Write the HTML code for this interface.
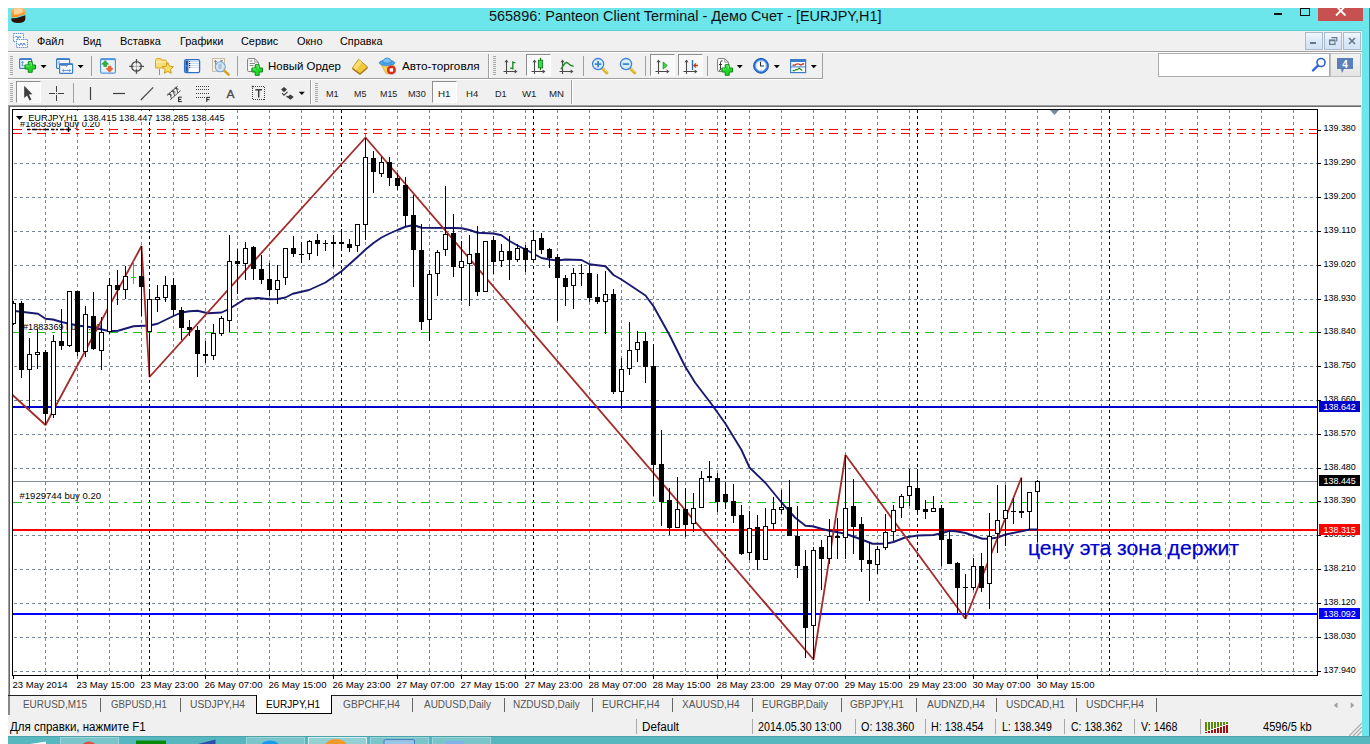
<!DOCTYPE html>
<html><head><meta charset="utf-8"><title>565896: Panteon Client Terminal</title>
<style>
html,body{margin:0;padding:0;background:#fff;}
body{width:1370px;height:744px;position:relative;overflow:hidden;font-family:"Liberation Sans",sans-serif;}
div,span,svg{position:absolute;box-sizing:border-box;}
span{white-space:nowrap;}
svg text{font-family:"Liberation Sans",sans-serif;}
</style></head><body>
<div style="left:8px;top:8px;width:1362px;height:728px;background:#6CE6EA;"></div>
<div style="left:1369px;top:8px;width:1px;height:728px;background:#3A8F96;"></div>
<div style="left:8px;top:31px;width:1354px;height:705px;background:#F0F0F0;"></div>
<div style="left:8px;top:30px;width:1354px;height:1px;background:#5FCFD4;"></div>
<svg style="left:10px;top:8px" width="17" height="17" viewBox="0 0 17 17">
<defs><linearGradient id="og" x1="0" y1="0" x2="0" y2="1"><stop offset="0" stop-color="#FFC070"/><stop offset="0.45" stop-color="#FFA436"/><stop offset="1" stop-color="#F58A18"/></linearGradient></defs>
<path d="M1.3 4 Q1.3 0 5 0 L11.5 0 Q15.2 0 15.2 4 L15.2 6.3 Q8 9.3 1.3 9.6 Z" fill="url(#og)"/>
<path d="M4 1.2 Q8 -0.3 12.5 1.2 L12.5 5 Q8 6.6 4 6.8 Z" fill="#FFE2BC" opacity="0.75"/>
<path d="M1.2 10.6 Q8 10.2 15.3 7.3 L15.3 11 Q15 15 8 15 Q1.2 15 1.2 11 Z" fill="#2A1408"/>
</svg>
<span style="left:488.6px;top:7.20px;font-size:15px;line-height:18px;color:#111;transform:scaleX(0.9635);transform-origin:0 50%;">565896: Panteon Client Terminal - Демо Счет - [EURJPY,H1]</span>
<div style="left:1274px;top:13px;width:8px;height:2px;background:#111;"></div>
<div style="left:1300px;top:8px;width:10px;height:8px;border:1px solid #111;"></div>
<div style="left:1318px;top:8px;width:45px;height:13px;background:#C75050;"></div>
<svg style="left:1335px;top:8px" width="12" height="9" viewBox="0 0 12 9"><path d="M1 -2 L10.5 7.5 M10.5 -2 L1 7.5" stroke="#fff" stroke-width="1.8" fill="none"/></svg>
<svg style="left:13px;top:33px" width="16" height="16" viewBox="0 0 16 16">
<rect x="0.5" y="0.5" width="10" height="8" fill="#fff" stroke="#5585DC" stroke-width="0.9" stroke-dasharray="1.5 0.7"/>
<path d="M2 4.5 L3.5 3 L5 5.5 L6.5 3 L8 5" stroke="#3B6FD0" stroke-width="0.9" fill="none"/>
<rect x="3.5" y="6.5" width="11" height="8" fill="#fff" stroke="#5585DC" stroke-width="0.9" stroke-dasharray="1.5 0.7"/>
<path d="M5 10.5 L6.5 12.5 L8 10 L9.5 12.5 L11 10 L12.5 12.5" stroke="#3B6FD0" stroke-width="0.9" fill="none"/>
</svg>
<span style="left:37.2px;top:34.45px;font-size:11.5px;line-height:15.5px;color:#000;transform:scaleX(0.9479);transform-origin:0 50%;">Файл</span>
<span style="left:83.4px;top:34.45px;font-size:11.5px;line-height:15.5px;color:#000;transform:scaleX(0.8748);transform-origin:0 50%;">Вид</span>
<span style="left:120.2px;top:34.45px;font-size:11.5px;line-height:15.5px;color:#000;transform:scaleX(0.9545);transform-origin:0 50%;">Вставка</span>
<span style="left:180px;top:34.45px;font-size:11.5px;line-height:15.5px;color:#000;transform:scaleX(0.9472);transform-origin:0 50%;">Графики</span>
<span style="left:241.3px;top:34.45px;font-size:11.5px;line-height:15.5px;color:#000;transform:scaleX(0.9446);transform-origin:0 50%;">Сервис</span>
<span style="left:296.5px;top:34.45px;font-size:11.5px;line-height:15.5px;color:#000;transform:scaleX(0.9542);transform-origin:0 50%;">Окно</span>
<span style="left:340.4px;top:34.45px;font-size:11.5px;line-height:15.5px;color:#000;transform:scaleX(0.9443);transform-origin:0 50%;">Справка</span>
<div style="left:1305px;top:32px;width:18px;height:18px;background:linear-gradient(#F2F7FD,#DCE9F8 50%,#D3E2F4);border:1px solid #A9BACD;"></div>
<div style="left:1324px;top:32px;width:18px;height:18px;background:linear-gradient(#F2F7FD,#DCE9F8 50%,#D3E2F4);border:1px solid #A9BACD;"></div>
<div style="left:1343px;top:32px;width:18px;height:18px;background:linear-gradient(#F2F7FD,#DCE9F8 50%,#D3E2F4);border:1px solid #A9BACD;"></div>
<div style="left:1310px;top:42px;width:6px;height:2px;background:#66788C;"></div>
<svg style="left:1329px;top:37px" width="9" height="9" viewBox="0 0 9 9"><path d="M2.5 0.7 H7.8 V4.5" stroke="#66788C" stroke-width="1.2" fill="none"/><rect x="0.6" y="3.1" width="5.3" height="4.3" stroke="#66788C" stroke-width="1.2" fill="none"/><path d="M0.5 3.5 H6" stroke="#66788C" stroke-width="1.4"/></svg>
<svg style="left:1348px;top:37px" width="8" height="8" viewBox="0 0 8 8"><path d="M1 1 L7 7 M7 1 L1 7" stroke="#66788C" stroke-width="1.7" fill="none"/></svg>
<div style="left:8px;top:51px;width:1354px;height:1px;background:#A0A0A0;"></div>
<div style="left:8px;top:52px;width:1354px;height:1px;background:#FFFFFF;"></div>
<div style="left:8px;top:78px;width:815px;height:1px;background:#A0A0A0;"></div>
<div style="left:8px;top:79px;width:815px;height:1px;background:#FFFFFF;"></div>
<div style="left:822px;top:53px;width:1px;height:26px;background:#A0A0A0;"></div>
<div style="left:488px;top:54px;width:1px;height:24px;background:#A0A0A0;"></div>
<div style="left:489px;top:54px;width:1px;height:24px;background:#fff;"></div>
<div style="left:310px;top:80px;width:1px;height:24px;background:#A0A0A0;"></div>
<div style="left:311px;top:80px;width:1px;height:24px;background:#fff;"></div>
<div style="left:571px;top:80px;width:1px;height:24px;background:#A0A0A0;"></div>
<div style="left:572px;top:80px;width:1px;height:24px;background:#fff;"></div>
<div style="left:10px;top:56px;width:3px;height:1px;background:#A8A8A8;"></div>
<div style="left:10px;top:58px;width:3px;height:1px;background:#A8A8A8;"></div>
<div style="left:10px;top:60px;width:3px;height:1px;background:#A8A8A8;"></div>
<div style="left:10px;top:62px;width:3px;height:1px;background:#A8A8A8;"></div>
<div style="left:10px;top:64px;width:3px;height:1px;background:#A8A8A8;"></div>
<div style="left:10px;top:66px;width:3px;height:1px;background:#A8A8A8;"></div>
<div style="left:10px;top:68px;width:3px;height:1px;background:#A8A8A8;"></div>
<div style="left:10px;top:70px;width:3px;height:1px;background:#A8A8A8;"></div>
<div style="left:10px;top:72px;width:3px;height:1px;background:#A8A8A8;"></div>
<div style="left:10px;top:74px;width:3px;height:1px;background:#A8A8A8;"></div>
<div style="left:493px;top:56px;width:3px;height:1px;background:#A8A8A8;"></div>
<div style="left:493px;top:58px;width:3px;height:1px;background:#A8A8A8;"></div>
<div style="left:493px;top:60px;width:3px;height:1px;background:#A8A8A8;"></div>
<div style="left:493px;top:62px;width:3px;height:1px;background:#A8A8A8;"></div>
<div style="left:493px;top:64px;width:3px;height:1px;background:#A8A8A8;"></div>
<div style="left:493px;top:66px;width:3px;height:1px;background:#A8A8A8;"></div>
<div style="left:493px;top:68px;width:3px;height:1px;background:#A8A8A8;"></div>
<div style="left:493px;top:70px;width:3px;height:1px;background:#A8A8A8;"></div>
<div style="left:493px;top:72px;width:3px;height:1px;background:#A8A8A8;"></div>
<div style="left:493px;top:74px;width:3px;height:1px;background:#A8A8A8;"></div>
<div style="left:10px;top:83px;width:3px;height:1px;background:#A8A8A8;"></div>
<div style="left:10px;top:85px;width:3px;height:1px;background:#A8A8A8;"></div>
<div style="left:10px;top:87px;width:3px;height:1px;background:#A8A8A8;"></div>
<div style="left:10px;top:89px;width:3px;height:1px;background:#A8A8A8;"></div>
<div style="left:10px;top:91px;width:3px;height:1px;background:#A8A8A8;"></div>
<div style="left:10px;top:93px;width:3px;height:1px;background:#A8A8A8;"></div>
<div style="left:10px;top:95px;width:3px;height:1px;background:#A8A8A8;"></div>
<div style="left:10px;top:97px;width:3px;height:1px;background:#A8A8A8;"></div>
<div style="left:10px;top:99px;width:3px;height:1px;background:#A8A8A8;"></div>
<div style="left:10px;top:101px;width:3px;height:1px;background:#A8A8A8;"></div>
<div style="left:315px;top:83px;width:3px;height:1px;background:#A8A8A8;"></div>
<div style="left:315px;top:85px;width:3px;height:1px;background:#A8A8A8;"></div>
<div style="left:315px;top:87px;width:3px;height:1px;background:#A8A8A8;"></div>
<div style="left:315px;top:89px;width:3px;height:1px;background:#A8A8A8;"></div>
<div style="left:315px;top:91px;width:3px;height:1px;background:#A8A8A8;"></div>
<div style="left:315px;top:93px;width:3px;height:1px;background:#A8A8A8;"></div>
<div style="left:315px;top:95px;width:3px;height:1px;background:#A8A8A8;"></div>
<div style="left:315px;top:97px;width:3px;height:1px;background:#A8A8A8;"></div>
<div style="left:315px;top:99px;width:3px;height:1px;background:#A8A8A8;"></div>
<div style="left:315px;top:101px;width:3px;height:1px;background:#A8A8A8;"></div>
<div style="left:91px;top:56px;width:1px;height:20px;background:#A0A0A0;"></div>
<div style="left:237px;top:56px;width:1px;height:20px;background:#A0A0A0;"></div>
<div style="left:583px;top:56px;width:1px;height:20px;background:#A0A0A0;"></div>
<div style="left:645px;top:56px;width:1px;height:20px;background:#A0A0A0;"></div>
<div style="left:707px;top:56px;width:1px;height:20px;background:#A0A0A0;"></div>
<div style="left:73px;top:83px;width:1px;height:20px;background:#A0A0A0;"></div>
<div style="left:526px;top:54px;width:25px;height:22px;background:#F9F9F9;border-left:1px solid #8E8E8E;border-top:1px solid #8E8E8E;border-right:1px solid #FFFFFF;border-bottom:1px solid #FFFFFF;"></div>
<div style="left:650px;top:54px;width:25px;height:22px;background:#F9F9F9;border-left:1px solid #8E8E8E;border-top:1px solid #8E8E8E;border-right:1px solid #FFFFFF;border-bottom:1px solid #FFFFFF;"></div>
<div style="left:678px;top:54px;width:25px;height:22px;background:#F9F9F9;border-left:1px solid #8E8E8E;border-top:1px solid #8E8E8E;border-right:1px solid #FFFFFF;border-bottom:1px solid #FFFFFF;"></div>
<div style="left:16px;top:81px;width:25px;height:22px;background:#F9F9F9;border-left:1px solid #8E8E8E;border-top:1px solid #8E8E8E;border-right:1px solid #FFFFFF;border-bottom:1px solid #FFFFFF;"></div>
<div style="left:432px;top:81px;width:25px;height:22px;background:#F9F9F9;border-left:1px solid #8E8E8E;border-top:1px solid #8E8E8E;border-right:1px solid #FFFFFF;border-bottom:1px solid #FFFFFF;"></div>
<svg style="left:0;top:0" width="1370" height="744" viewBox="0 0 1370 744"><rect x="19.6" y="58.8" width="12" height="9.6" rx="1" fill="#F2F7FD" stroke="#3B7CCB" stroke-width="1.2"/><rect x="19.6" y="58.4" width="12" height="1.6" fill="#3B7CCB"/><path d="M22.5 61.5 v4.5 M21.3 62.8 l1.2 -1.4 1.2 1.4 M21.3 64.8 l1.2 1.4 1.2 -1.4" stroke="#5E8FCB" stroke-width="0.9" fill="none"/><path d="M28.2 61.7 h4 v3.3 h3.3 v4 h-3.3 v3.3 h-4 v-3.3 h-3.3 v-4 h3.3 z" fill="#25D52C" stroke="#0B8A12" stroke-width="1"/><path d="M29.1 62.800000000000004 h2.2 v3.2 M25.9 66.0 h3.2" stroke="#9CFF9C" stroke-width="0.9" fill="none" opacity="0.8"/><path d="M40.6 65 h6 l-3 3.2 z" fill="#000"/><rect x="56.6" y="58.8" width="13" height="9.6" rx="1" fill="#F2F7FD" stroke="#3B7CCB" stroke-width="1.2"/><rect x="56.6" y="58.4" width="13" height="1.6" fill="#3B7CCB"/><rect x="59.6" y="63.8" width="13" height="9.6" rx="1" fill="#F2F7FD" stroke="#3B7CCB" stroke-width="1.2"/><rect x="59.6" y="63.4" width="13" height="1.6" fill="#3B7CCB"/><path d="M59 60.8 v4 M60.5 65.5 h7 M66 64.3 l1.5 1.2 -1.5 1.2" stroke="#5E8FCB" stroke-width="0.9" fill="none"/><path d="M62.5 70.5 h8 M63.8 69.3 l-1.5 1.2 1.5 1.2 M69.2 69.3 l1.5 1.2 -1.5 1.2" stroke="#5E8FCB" stroke-width="0.9" fill="none"/><path d="M77.6 65 h6 l-3 3.2 z" fill="#000"/><rect x="100.6" y="58.8" width="14.8" height="14.4" rx="1.5" fill="#F4F8FD" stroke="#4C93E0" stroke-width="1.2"/><rect x="100.6" y="58.4" width="14.8" height="1.8" fill="#4C93E0"/><path d="M109.5 62.5 h4.5 M109.5 64.5 h4.5 M101.5 69.5 h5 M101.5 71.5 h5" stroke="#D8E2EE" stroke-width="0.8"/><path d="M105.2 60.6 l3.4 3.6 h-2 v2.4 h-2.8 v-2.4 h-2 z" fill="#2DB83A" stroke="#148A20" stroke-width="0.6"/><path d="M109.6 72.2 l-3.4 -3.6 h2 v-2.4 h2.8 v2.4 h2 z" fill="#F06A30" stroke="#C8401A" stroke-width="0.6"/><circle cx="136.5" cy="66.4" r="4.8" fill="none" stroke="#4A4A4A" stroke-width="1.3"/><path d="M136.5 59 V63.5 M136.5 69.3 V73.8 M129.2 66.4 H133.6 M139.4 66.4 H144" stroke="#4A4A4A" stroke-width="1.3"/><path d="M136.5 64 v4.8 M134 66.4 h5" stroke="#9A9A9A" stroke-width="0.7"/><path d="M155.5 60.5 q0 -2 2 -2 h2.5 q1.5 0 2 1.5 h3 q1.5 0 1.5 1.5 v6.5 h-11 z" fill="#F7DC78" stroke="#D9A827" stroke-width="1"/><path d="M156 62 h10" stroke="#FFF3B8" stroke-width="1.2"/><path d="M159.5 69.5 v5" stroke="#333" stroke-width="1" stroke-dasharray="1 1"/><path d="M167.8 62.6 l1.7 3.6 3.9 .5 -2.9 2.7 .8 3.9 -3.5 -1.9 -3.5 1.9 .8 -3.9 -2.9 -2.7 3.9 -.5 z" fill="#FBE060" stroke="#C8930F" stroke-width="0.9"/><rect x="184.6" y="59.6" width="15" height="13" rx="1.6" fill="#FFFFFF" stroke="#2C6FC6" stroke-width="1.3"/><rect x="185.2" y="60.2" width="3.3" height="11.8" fill="#3C80D8"/><rect x="186.3" y="61" width="1" height="4" fill="#0A1A40"/><rect x="186.3" y="66.5" width="1" height="4.5" fill="#1A3A80"/><path d="M189.5 61.5 h9.5 M189.5 63.5 h9.5 M189.5 65.5 h9.5 M189.5 67.5 h9.5" stroke="#BFD2F2" stroke-width="0.8"/><rect x="189" y="61" width="1.2" height="1.2" fill="#E02020"/><rect x="189" y="63" width="1.2" height="1.2" fill="#203020"/><rect x="189" y="65" width="1.2" height="1.2" fill="#203020"/><rect x="189" y="67" width="1.2" height="1.2" fill="#E02020"/><rect x="212.5" y="58.5" width="12" height="12.8" fill="#F4F1EA" stroke="#C9BCA0" stroke-width="1"/><path d="M215.5 60 v6 M221.5 60 v5 M214 61.5 h3 M220 60.8 h3" stroke="#8A8A8A" stroke-width="1"/><circle cx="220.3" cy="66.8" r="5" fill="#CFE6FA" fill-opacity="0.9" stroke="#6DA6E0" stroke-width="1.1"/><rect x="218.3" y="64" width="3.2" height="5" fill="#A8B8C8" opacity="0.8"/><path d="M224.2 70.6 L228.6 74.6" stroke="#D6A21E" stroke-width="2.6" stroke-linecap="round"/><path d="M247.6 59.6 q0 -1 1 -1 h6.2 l3.6 3.6 v8.2 q0 1 -1 1 h-8.8 q-1 0 -1 -1 z" fill="#FFFFFF" stroke="#7A7A7A" stroke-width="1"/><path d="M254.8 58.8 v3.4 h3.4" fill="none" stroke="#7A7A7A" stroke-width="0.8"/><path d="M249.5 61 h3 M249.5 63.5 h5.5 M249.5 65.5 h4" stroke="#8A8A8A" stroke-width="1"/><path d="M255.2 64.7 h4 v3.3 h3.3 v4 h-3.3 v3.3 h-4 v-3.3 h-3.3 v-4 h3.3 z" fill="#25D52C" stroke="#0B8A12" stroke-width="1"/><path d="M256.1 65.8 h2.2 v3.2 M252.9 69.0 h3.2" stroke="#9CFF9C" stroke-width="0.9" fill="none" opacity="0.8"/><path d="M352.4 68 L358.6 59.3 L367.6 67 L360 73.6 Z" fill="#F2C83C" stroke="#B5851A" stroke-width="0.9"/><path d="M353 67.6 L359 59.8 L362 62.3 L356 70.2 Z" fill="#FBE27A" opacity="0.85"/><path d="M352.4 68 L360 73.6 L367.6 67 L367.6 68.6 L360 75 L352.4 69.5 Z" fill="#A87412"/><path d="M381.5 65 Q387 69 393.8 64.5 L394.5 67 Q389 77 385.5 72.8 Z" fill="#F5DA58" stroke="#D2A82A" stroke-width="0.8"/><ellipse cx="387" cy="62.8" rx="7.8" ry="2.6" fill="#4FA6E8" stroke="#2E7FCB" stroke-width="0.8"/><path d="M382.8 62.5 q0.5 -4.4 4.4 -4.4 q3.8 0 4.2 4.4 q-4.3 1.6 -8.6 0 z" fill="#7CC2F2" stroke="#2E7FCB" stroke-width="0.8"/><circle cx="391.4" cy="70" r="4.1" fill="#E3261C"/><circle cx="391.4" cy="70" r="4.1" fill="none" stroke="#B81810" stroke-width="0.6"/><rect x="389.7" y="68.3" width="3.4" height="3.4" fill="#FFFFFF"/><path d="M506.5 61 V74 M503.5 71.5 H516" stroke="#4A4A4A" stroke-width="1.1" fill="none"/><path d="M506.5 59.5 l-2 2.8 h4 z M517.5 71.5 l-2.8 -2 v4 z" fill="#4A4A4A"/><path d="M512.8 61.2 V69.6 M512.8 62.6 h2.6 M512.8 68.2 h-2.6" stroke="#1E8F2A" stroke-width="1.4" fill="none"/><path d="M534.5 61 V74 M531.5 71.5 H544" stroke="#4A4A4A" stroke-width="1.1" fill="none"/><path d="M534.5 59.5 l-2 2.8 h4 z M545.5 71.5 l-2.8 -2 v4 z" fill="#4A4A4A"/><path d="M540.5 57.8 V70.2" stroke="#147A1E" stroke-width="1.2"/><rect x="538.4" y="60.2" width="4.2" height="7.6" fill="#3CDC48" stroke="#147A1E" stroke-width="0.9"/><path d="M562.5 61 V74 M559.5 71.5 H572" stroke="#4A4A4A" stroke-width="1.1" fill="none"/><path d="M562.5 59.5 l-2 2.8 h4 z M573.5 71.5 l-2.8 -2 v4 z" fill="#4A4A4A"/><path d="M561 69.2 Q565.5 60.5 568 63.2 T573.6 66.2" stroke="#1E8F2A" stroke-width="1.4" fill="none"/><path d="M602.3000000000001 68.4 L606.9 72.8" stroke="#D9B21E" stroke-width="3" stroke-linecap="round"/><path d="M602.5 67.8 L607.3000000000001 72.4" stroke="#F6E27A" stroke-width="1"/><circle cx="598.1" cy="64.1" r="5.6" fill="#D9EEFC" stroke="#3B7FDB" stroke-width="1.3"/><path d="M594.9 64.1 h6.4 M598.1 60.9 v6.4" stroke="#3F86C6" stroke-width="1.8"/><path d="M630.2 68.4 L634.8 72.8" stroke="#D9B21E" stroke-width="3" stroke-linecap="round"/><path d="M630.4 67.8 L635.2 72.4" stroke="#F6E27A" stroke-width="1"/><circle cx="626" cy="64.1" r="5.6" fill="#D9EEFC" stroke="#3B7FDB" stroke-width="1.3"/><path d="M622.8 64.1 h6.4" stroke="#3F86C6" stroke-width="1.8"/><path d="M658.5 61 V74 M655.5 71.5 H668" stroke="#4A4A4A" stroke-width="1.1" fill="none"/><path d="M658.5 59.5 l-2 2.8 h4 z M669.5 71.5 l-2.8 -2 v4 z" fill="#4A4A4A"/><path d="M663.2 62 L667.2 65.5 L663.2 69 Z" fill="#3CDC48" stroke="#179A24" stroke-width="0.9"/><path d="M686.5 61 V74 M683.5 71.5 H696" stroke="#4A4A4A" stroke-width="1.1" fill="none"/><path d="M686.5 59.5 l-2 2.8 h4 z M697.5 71.5 l-2.8 -2 v4 z" fill="#4A4A4A"/><path d="M692.5 60 V70" stroke="#1F6FB5" stroke-width="1.3"/><path d="M698 65.5 H694 M696 63.4 L693.8 65.5 L696 67.6" stroke="#D0400A" stroke-width="1.3" fill="none"/><path d="M717.6 59.6 q0 -1 1 -1 h6.2 l3.6 3.6 v8.2 q0 1 -1 1 h-8.8 q-1 0 -1 -1 z" fill="#FFFFFF" stroke="#7A7A7A" stroke-width="1"/><path d="M724.8 58.8 v3.4 h3.4" fill="none" stroke="#7A7A7A" stroke-width="0.8"/><path d="M722.5 60.8 q-2 -.3 -2 1.7 v6.5 q0 1.6 -1.3 1.6 M719 64.5 h3" stroke="#3A3A3A" stroke-width="1" fill="none"/><path d="M725.2 64.7 h4 v3.3 h3.3 v4 h-3.3 v3.3 h-4 v-3.3 h-3.3 v-4 h3.3 z" fill="#25D52C" stroke="#0B8A12" stroke-width="1"/><path d="M726.1 65.8 h2.2 v3.2 M722.9 69.0 h3.2" stroke="#9CFF9C" stroke-width="0.9" fill="none" opacity="0.8"/><path d="M736.8 65 h6 l-3 3.2 z" fill="#000"/><circle cx="761" cy="65.8" r="7.4" fill="#2C78E0" stroke="#1B58B8" stroke-width="1"/><circle cx="761" cy="65.8" r="5.4" fill="#FDFDFD" stroke="#8CB8F0" stroke-width="0.8"/><path d="M760.5 61.8 V66 H764" stroke="#333" stroke-width="1.1" fill="none"/><path d="M761 61 v0.8 M761 69.8 v0.8 M756.4 65.8 h0.8 M764.8 65.8 h0.8" stroke="#888" stroke-width="0.8"/><path d="M773.8 65 h6 l-3 3.2 z" fill="#000"/><rect x="790.6" y="59.6" width="15" height="13" fill="#FFFFFF" stroke="#3B7CCB" stroke-width="1.2"/><rect x="790.6" y="59.4" width="15" height="2.6" fill="#3B7CCB"/><path d="M791 66.9 h14.4" stroke="#3B7CCB" stroke-width="1"/><path d="M792.5 65.2 h2.5 l1.5 -1.2 h2.5 l1.2 .8 h1.5 l1 -1 h1.5" stroke="#A82814" stroke-width="1.2" fill="none"/><path d="M792.5 70.6 h2 l1.2 -1 h1.8 l1.8 -1.6 1.6 1.6 1.4 1" stroke="#1E8F2A" stroke-width="1.2" fill="none"/><path d="M810.8 65 h6 l-3 3.2 z" fill="#000"/><path d="M24.2 85.8 V98 L27 95.4 L29.6 100.4 L31.4 99.5 L28.9 94.6 L32.4 94.3 Z" fill="#3E3E3E"/><path d="M56.5 86 V92 M56.5 95 V101 M49 93.5 H55 M58 93.5 H64" stroke="#3E3E3E" stroke-width="1"/><rect x="56" y="93" width="1" height="1" fill="#3E3E3E"/><path d="M90.5 87 V100" stroke="#3E3E3E" stroke-width="1.2"/><path d="M113 93.5 H125" stroke="#3E3E3E" stroke-width="1.2"/><path d="M140.8 100 L153.2 87.4" stroke="#3E3E3E" stroke-width="1.1"/><path d="M166.8 95.6 L177.6 86.4 M170.2 99.8 L180.6 90.6 M169.6 92.6 l1.8 6 M172.8 89.6 l1.8 6.2 M176 86.6 l1.8 6.2 M167.5 94 l4.5 1.2 M171 91 l4.5 1.2 M174.2 88 l4.5 1.2" stroke="#3E3E3E" stroke-width="0.9" fill="none"/><path d="M178.6 97.2 h3.2 M178.6 99.4 h2.6 M178.6 101.6 h3.2 M178.6 97 v5" stroke="#222" stroke-width="1" fill="none"/><path d="M196 86.5 H209" stroke="#3E3E3E" stroke-width="1" stroke-dasharray="1 1"/><path d="M196 89.5 H209" stroke="#3E3E3E" stroke-width="1" stroke-dasharray="1 1"/><path d="M196 93.5 H209" stroke="#3E3E3E" stroke-width="1" stroke-dasharray="1 1"/><path d="M196 97.5 H209" stroke="#3E3E3E" stroke-width="1" stroke-dasharray="1 1"/><rect x="205" y="96" width="6" height="7" fill="#F0F0F0"/><path d="M206.8 97 v5 M206.8 97.4 h3.2 M206.8 99.6 h2.6" stroke="#222" stroke-width="1" fill="none"/><text x="226.6" y="97.6" font-size="11.8" fill="#4A4A4A" stroke="#4A4A4A" stroke-width="0.3" textLength="8" lengthAdjust="spacingAndGlyphs">A</text><rect x="252.5" y="86.5" width="12" height="13" fill="none" stroke="#3E3E3E" stroke-width="1" stroke-dasharray="1 1" shape-rendering="crispEdges"/><rect x="251.8" y="85.8" width="1.6" height="1.6" fill="#3E3E3E"/><path d="M255.4 89.8 H262 M258.7 89.8 V97.6" stroke="#3E3E3E" stroke-width="1.5" fill="none"/><path d="M284 87 l3 2.6 -3 2.6 -3 -2.6 z M290.4 94.4 l3.4 2.7 -3.4 2.7 -3.4 -2.7 z" fill="#3E3E3E"/><path d="M282 93.2 l2 2 3.6 -3.4 M286.5 96 l1.5 1.2" stroke="#3E3E3E" stroke-width="1.1" fill="none"/><path d="M298.8 91.8 h6 l-3 3.2 z" fill="#000"/></svg>
<span style="left:325.7px;top:87.05px;font-size:9.5px;line-height:13.5px;color:#222;transform:scaleX(0.9623);transform-origin:0 50%;">M1</span>
<span style="left:353.7px;top:87.05px;font-size:9.5px;line-height:13.5px;color:#222;transform:scaleX(0.9320);transform-origin:0 50%;">M5</span>
<span style="left:380px;top:87.05px;font-size:9.5px;line-height:13.5px;color:#222;transform:scaleX(0.9361);transform-origin:0 50%;">M15</span>
<span style="left:407.5px;top:87.05px;font-size:9.5px;line-height:13.5px;color:#222;transform:scaleX(0.9631);transform-origin:0 50%;">M30</span>
<span style="left:438px;top:87.05px;font-size:9.5px;line-height:13.5px;color:#222;transform:scaleX(1.0293);transform-origin:0 50%;">H1</span>
<span style="left:465.8px;top:87.05px;font-size:9.5px;line-height:13.5px;color:#222;transform:scaleX(1.0046);transform-origin:0 50%;">H4</span>
<span style="left:494.8px;top:87.05px;font-size:9.5px;line-height:13.5px;color:#222;transform:scaleX(0.9552);transform-origin:0 50%;">D1</span>
<span style="left:522px;top:87.05px;font-size:9.5px;line-height:13.5px;color:#222;transform:scaleX(1.0175);transform-origin:0 50%;">W1</span>
<span style="left:548.7px;top:87.05px;font-size:9.5px;line-height:13.5px;color:#222;transform:scaleX(1.0152);transform-origin:0 50%;">MN</span>
<span style="left:268.4px;top:58.70px;font-size:11px;line-height:15px;color:#000;transform:scaleX(1.0415);transform-origin:0 50%;">Новый Ордер</span>
<span style="left:402.4px;top:58.70px;font-size:11px;line-height:15px;color:#000;transform:scaleX(1.0683);transform-origin:0 50%;">Авто-торговля</span>
<div style="left:1158px;top:53px;width:172px;height:24px;background:#fff;border:1px solid #ABADB3;"></div>
<div style="left:1330px;top:53px;width:31px;height:24px;background:linear-gradient(#F4F4F4,#E4E4E4);border:1px solid #C0C0C0;"></div>
<svg style="left:1311px;top:57px" width="16" height="16" viewBox="0 0 16 16"><circle cx="10" cy="5.5" r="4" fill="#fff" stroke="#2F5FD0" stroke-width="1.6"/><path d="M7 8.5 L2 13.5" stroke="#2F5FD0" stroke-width="2.4" stroke-linecap="round"/></svg>
<svg style="left:1336px;top:57px" width="18" height="18" viewBox="0 0 18 18"><path d="M1 1 H17 V12 H8 L6 16 L5 12 H1 Z" fill="#5B7FB8"/><text x="9" y="10.5" font-size="10" font-weight="bold" fill="#fff" text-anchor="middle">4</text></svg>
<div style="left:8px;top:105px;width:1354px;height:591px;background:#fff;"></div>
<div style="left:8px;top:105px;width:1354px;height:1px;background:#A0A0A0;"></div>
<div style="left:8px;top:106px;width:1354px;height:1px;background:#696969;"></div>
<div style="left:8px;top:105px;width:1px;height:591px;background:#A0A0A0;"></div>
<div style="left:9px;top:106px;width:1px;height:590px;background:#696969;"></div>
<div style="left:1361px;top:105px;width:1px;height:591px;background:#E3E3E3;"></div>
<svg style="left:0;top:0" width="1370" height="744" viewBox="0 0 1370 744">
<g shape-rendering="crispEdges">
<line x1="45.5" y1="110" x2="45.5" y2="675" stroke="#778899" stroke-width="1" stroke-dasharray="3 3"/>
<line x1="77.5" y1="110" x2="77.5" y2="675" stroke="#778899" stroke-width="1" stroke-dasharray="3 3"/>
<line x1="109.5" y1="110" x2="109.5" y2="675" stroke="#778899" stroke-width="1" stroke-dasharray="3 3"/>
<line x1="141.5" y1="110" x2="141.5" y2="675" stroke="#778899" stroke-width="1" stroke-dasharray="3 3"/>
<line x1="173.5" y1="110" x2="173.5" y2="675" stroke="#778899" stroke-width="1" stroke-dasharray="3 3"/>
<line x1="205.5" y1="110" x2="205.5" y2="675" stroke="#778899" stroke-width="1" stroke-dasharray="3 3"/>
<line x1="237.5" y1="110" x2="237.5" y2="675" stroke="#778899" stroke-width="1" stroke-dasharray="3 3"/>
<line x1="269.5" y1="110" x2="269.5" y2="675" stroke="#778899" stroke-width="1" stroke-dasharray="3 3"/>
<line x1="301.5" y1="110" x2="301.5" y2="675" stroke="#778899" stroke-width="1" stroke-dasharray="3 3"/>
<line x1="333.5" y1="110" x2="333.5" y2="675" stroke="#778899" stroke-width="1" stroke-dasharray="3 3"/>
<line x1="365.5" y1="110" x2="365.5" y2="675" stroke="#778899" stroke-width="1" stroke-dasharray="3 3"/>
<line x1="397.5" y1="110" x2="397.5" y2="675" stroke="#778899" stroke-width="1" stroke-dasharray="3 3"/>
<line x1="429.5" y1="110" x2="429.5" y2="675" stroke="#778899" stroke-width="1" stroke-dasharray="3 3"/>
<line x1="461.5" y1="110" x2="461.5" y2="675" stroke="#778899" stroke-width="1" stroke-dasharray="3 3"/>
<line x1="493.5" y1="110" x2="493.5" y2="675" stroke="#778899" stroke-width="1" stroke-dasharray="3 3"/>
<line x1="525.5" y1="110" x2="525.5" y2="675" stroke="#778899" stroke-width="1" stroke-dasharray="3 3"/>
<line x1="557.5" y1="110" x2="557.5" y2="675" stroke="#778899" stroke-width="1" stroke-dasharray="3 3"/>
<line x1="589.5" y1="110" x2="589.5" y2="675" stroke="#778899" stroke-width="1" stroke-dasharray="3 3"/>
<line x1="621.5" y1="110" x2="621.5" y2="675" stroke="#778899" stroke-width="1" stroke-dasharray="3 3"/>
<line x1="653.5" y1="110" x2="653.5" y2="675" stroke="#778899" stroke-width="1" stroke-dasharray="3 3"/>
<line x1="685.5" y1="110" x2="685.5" y2="675" stroke="#778899" stroke-width="1" stroke-dasharray="3 3"/>
<line x1="717.5" y1="110" x2="717.5" y2="675" stroke="#778899" stroke-width="1" stroke-dasharray="3 3"/>
<line x1="749.5" y1="110" x2="749.5" y2="675" stroke="#778899" stroke-width="1" stroke-dasharray="3 3"/>
<line x1="781.5" y1="110" x2="781.5" y2="675" stroke="#778899" stroke-width="1" stroke-dasharray="3 3"/>
<line x1="813.5" y1="110" x2="813.5" y2="675" stroke="#778899" stroke-width="1" stroke-dasharray="3 3"/>
<line x1="845.5" y1="110" x2="845.5" y2="675" stroke="#778899" stroke-width="1" stroke-dasharray="3 3"/>
<line x1="877.5" y1="110" x2="877.5" y2="675" stroke="#778899" stroke-width="1" stroke-dasharray="3 3"/>
<line x1="909.5" y1="110" x2="909.5" y2="675" stroke="#778899" stroke-width="1" stroke-dasharray="3 3"/>
<line x1="941.5" y1="110" x2="941.5" y2="675" stroke="#778899" stroke-width="1" stroke-dasharray="3 3"/>
<line x1="973.5" y1="110" x2="973.5" y2="675" stroke="#778899" stroke-width="1" stroke-dasharray="3 3"/>
<line x1="1005.5" y1="110" x2="1005.5" y2="675" stroke="#778899" stroke-width="1" stroke-dasharray="3 3"/>
<line x1="1037.5" y1="110" x2="1037.5" y2="675" stroke="#778899" stroke-width="1" stroke-dasharray="3 3"/>
<line x1="1069.5" y1="110" x2="1069.5" y2="675" stroke="#778899" stroke-width="1" stroke-dasharray="3 3"/>
<line x1="1101.5" y1="110" x2="1101.5" y2="675" stroke="#778899" stroke-width="1" stroke-dasharray="3 3"/>
<line x1="1133.5" y1="110" x2="1133.5" y2="675" stroke="#778899" stroke-width="1" stroke-dasharray="3 3"/>
<line x1="1165.5" y1="110" x2="1165.5" y2="675" stroke="#778899" stroke-width="1" stroke-dasharray="3 3"/>
<line x1="1197.5" y1="110" x2="1197.5" y2="675" stroke="#778899" stroke-width="1" stroke-dasharray="3 3"/>
<line x1="1229.5" y1="110" x2="1229.5" y2="675" stroke="#778899" stroke-width="1" stroke-dasharray="3 3"/>
<line x1="1261.5" y1="110" x2="1261.5" y2="675" stroke="#778899" stroke-width="1" stroke-dasharray="3 3"/>
<line x1="1293.5" y1="110" x2="1293.5" y2="675" stroke="#778899" stroke-width="1" stroke-dasharray="3 3"/>
<line x1="14" y1="163.5" x2="1317" y2="163.5" stroke="#778899" stroke-width="1" stroke-dasharray="3 3"/>
<line x1="14" y1="197.5" x2="1317" y2="197.5" stroke="#778899" stroke-width="1" stroke-dasharray="3 3"/>
<line x1="14" y1="231.5" x2="1317" y2="231.5" stroke="#778899" stroke-width="1" stroke-dasharray="3 3"/>
<line x1="14" y1="265.5" x2="1317" y2="265.5" stroke="#778899" stroke-width="1" stroke-dasharray="3 3"/>
<line x1="14" y1="299.5" x2="1317" y2="299.5" stroke="#778899" stroke-width="1" stroke-dasharray="3 3"/>
<line x1="14" y1="366.5" x2="1317" y2="366.5" stroke="#778899" stroke-width="1" stroke-dasharray="3 3"/>
<line x1="14" y1="400.5" x2="1317" y2="400.5" stroke="#778899" stroke-width="1" stroke-dasharray="3 3"/>
<line x1="14" y1="434.5" x2="1317" y2="434.5" stroke="#778899" stroke-width="1" stroke-dasharray="3 3"/>
<line x1="14" y1="468.5" x2="1317" y2="468.5" stroke="#778899" stroke-width="1" stroke-dasharray="3 3"/>
<line x1="14" y1="535.5" x2="1317" y2="535.5" stroke="#778899" stroke-width="1" stroke-dasharray="3 3"/>
<line x1="14" y1="569.5" x2="1317" y2="569.5" stroke="#778899" stroke-width="1" stroke-dasharray="3 3"/>
<line x1="14" y1="603.5" x2="1317" y2="603.5" stroke="#778899" stroke-width="1" stroke-dasharray="3 3"/>
<line x1="14" y1="637.5" x2="1317" y2="637.5" stroke="#778899" stroke-width="1" stroke-dasharray="3 3"/>
<line x1="14" y1="671.5" x2="1317" y2="671.5" stroke="#778899" stroke-width="1" stroke-dasharray="3 3"/>
<line x1="149.5" y1="110" x2="149.5" y2="675" stroke="#000" stroke-width="1" stroke-dasharray="3 3"/>
<line x1="341.5" y1="110" x2="341.5" y2="675" stroke="#000" stroke-width="1" stroke-dasharray="3 3"/>
<line x1="533.5" y1="110" x2="533.5" y2="675" stroke="#000" stroke-width="1" stroke-dasharray="3 3"/>
<line x1="725.5" y1="110" x2="725.5" y2="675" stroke="#000" stroke-width="1" stroke-dasharray="3 3"/>
<line x1="917.5" y1="110" x2="917.5" y2="675" stroke="#000" stroke-width="1" stroke-dasharray="3 3"/>
<line x1="1109.5" y1="110" x2="1109.5" y2="675" stroke="#000" stroke-width="1" stroke-dasharray="3 3"/>
<rect x="13" y="129" width="1304" height="1" fill="#fff"/>
<line x1="13" y1="129.5" x2="1317" y2="129.5" stroke="#FF0000" stroke-width="1" stroke-dasharray="9 6 3 6"/>
<rect x="13" y="133" width="1304" height="1" fill="#fff"/>
<line x1="13" y1="133.5" x2="1317" y2="133.5" stroke="#FF0000" stroke-width="1" stroke-dasharray="9 6 3 6"/>
<rect x="13" y="332" width="1304" height="1" fill="#fff"/>
<line x1="13" y1="332.5" x2="1317" y2="332.5" stroke="#22C022" stroke-width="1" stroke-dasharray="9 6 3 6"/>
<rect x="13" y="502" width="1304" height="1" fill="#fff"/>
<line x1="13" y1="502.5" x2="1317" y2="502.5" stroke="#22C022" stroke-width="1" stroke-dasharray="9 6 3 6"/>
<rect x="13" y="481" width="1304" height="1" fill="#7F8C9B"/>
</g>
<text x="23" y="329.8" font-size="9" fill="#000" textLength="78" lengthAdjust="spacingAndGlyphs">#1883369 buy 0.20</text>
<text x="19.5" y="499.2" font-size="9" fill="#000" textLength="81.5" lengthAdjust="spacingAndGlyphs">#1929744 buy 0.20</text>
<g shape-rendering="crispEdges">
<rect x="13" y="406" width="1304" height="2" fill="#0000CC"/>
<rect x="13" y="529" width="1304" height="2" fill="#FF0000"/>
<rect x="13" y="613" width="1304" height="2" fill="#0000FF"/>
</g>
<polyline points="13,311 16.75,311.25 38,313.75 45.5,318.75 53,319.5 61.5,322 77.5,325.5 93.5,327.5 109.5,331.25 118,330.75 133.5,326.25 149.5,325.5 157.5,323.75 173.5,316 181.5,312.5 189.5,311.25 197.5,310.75 208,313.25 221.5,312.5 229.5,308.75 245.5,298.75 258,298 269.5,299.25 277.5,299 285.5,297.5 292.75,293.75 309,290 325.5,282.5 341.5,271.25 357.5,257 365.5,249.5 373.5,243 381.5,237.5 389.5,233.5 397.5,230 405.5,226.75 413.5,225 421.5,227.75 454,228 461.5,228.25 469.5,230 477.5,232.75 493.5,233.5 501.5,235.25 509.5,241 517.5,245.5 525.5,249.5 533.5,253.75 541.5,258 549.5,259.5 557.5,260.5 565.5,259.5 581.5,260 589.5,264.25 605.5,266.25 613.5,275 621.5,279.5 645.5,295.5 653.5,306.25 669.5,335 685,366.25 695,382.5 711.25,403.75 725.5,423.75 741.5,450 749.5,467.5 765.5,483 781.5,502.5 795,517.5 805.5,525.75 812.5,526.25 821.5,528.75 829.5,530.75 845.5,533.75 861.5,539.5 872.5,543.75 885.5,543.75 893.5,542 905,537.5 917.5,535.5 933.5,535 941.5,533.25 949.5,530.75 957.5,531.5 965.5,533 973.5,535.75 982.5,538.75 989.5,538.75 997.5,537.5 1005.5,534.5 1021.5,531.25 1029.5,529.5 1037.5,529.5" fill="none" stroke="#191970" stroke-width="1.9" stroke-linejoin="round"/>
<polyline points="12,394.5 45.5,425 141.5,246 149.5,377 365.5,137.5 813.5,659.5 845.5,455 965.5,618.75 1021.5,477.5" fill="none" stroke="#A52A2A" stroke-width="1.8" stroke-linejoin="bevel"/>
<text x="1028" y="554.6" font-size="21" fill="#0000CC" stroke="#0000CC" stroke-width="0.25" textLength="211" lengthAdjust="spacingAndGlyphs">цену эта зона держит</text>
<g shape-rendering="crispEdges">
<rect x="13" y="301" width="1" height="24" fill="#000"/>
<rect x="11" y="303" width="5" height="21" fill="#000"/>
<rect x="12" y="304" width="3" height="19" fill="#fff"/>
<rect x="21" y="301" width="1" height="77" fill="#000"/>
<rect x="19" y="303" width="5" height="67" fill="#000"/>
<rect x="29" y="338" width="1" height="71" fill="#000"/>
<rect x="27" y="354" width="5" height="16" fill="#000"/>
<rect x="28" y="355" width="3" height="14" fill="#fff"/>
<rect x="37" y="329" width="1" height="40" fill="#000"/>
<rect x="35" y="352" width="5" height="3" fill="#000"/>
<rect x="36" y="353" width="3" height="1" fill="#fff"/>
<rect x="45" y="350" width="1" height="75" fill="#000"/>
<rect x="43" y="352" width="5" height="62" fill="#000"/>
<rect x="53" y="335" width="1" height="83" fill="#000"/>
<rect x="51" y="341" width="5" height="74" fill="#000"/>
<rect x="52" y="342" width="3" height="72" fill="#fff"/>
<rect x="61" y="309" width="1" height="41" fill="#000"/>
<rect x="59" y="341" width="5" height="5" fill="#000"/>
<rect x="69" y="291" width="1" height="56" fill="#000"/>
<rect x="67" y="291" width="5" height="55" fill="#000"/>
<rect x="68" y="292" width="3" height="53" fill="#fff"/>
<rect x="77" y="291" width="1" height="65" fill="#000"/>
<rect x="75" y="291" width="5" height="61" fill="#000"/>
<rect x="85" y="306" width="1" height="51" fill="#000"/>
<rect x="83" y="314" width="5" height="38" fill="#000"/>
<rect x="84" y="315" width="3" height="36" fill="#fff"/>
<rect x="93" y="292" width="1" height="58" fill="#000"/>
<rect x="91" y="316" width="5" height="33" fill="#000"/>
<rect x="101" y="317" width="1" height="53" fill="#000"/>
<rect x="99" y="332" width="5" height="19" fill="#000"/>
<rect x="100" y="333" width="3" height="17" fill="#fff"/>
<rect x="109" y="278" width="1" height="56" fill="#000"/>
<rect x="107" y="285" width="5" height="47" fill="#000"/>
<rect x="108" y="286" width="3" height="45" fill="#fff"/>
<rect x="117" y="270" width="1" height="35" fill="#000"/>
<rect x="115" y="285" width="5" height="5" fill="#000"/>
<rect x="125" y="266" width="1" height="33" fill="#000"/>
<rect x="123" y="276" width="5" height="14" fill="#000"/>
<rect x="124" y="277" width="3" height="12" fill="#fff"/>
<rect x="133" y="261" width="1" height="23" fill="#00E000"/><rect x="131" y="277" width="5" height="1" fill="#00E000"/>
<rect x="141" y="246" width="1" height="70" fill="#000"/>
<rect x="139" y="276" width="5" height="11" fill="#000"/>
<rect x="149" y="289" width="1" height="88" fill="#000"/>
<rect x="147" y="299" width="5" height="33" fill="#000"/>
<rect x="148" y="300" width="3" height="31" fill="#fff"/>
<rect x="157" y="285" width="1" height="27" fill="#000"/>
<rect x="155" y="297" width="5" height="3" fill="#000"/>
<rect x="156" y="298" width="3" height="1" fill="#fff"/>
<rect x="165" y="276" width="1" height="26" fill="#000"/>
<rect x="163" y="285" width="5" height="13" fill="#000"/>
<rect x="164" y="286" width="3" height="11" fill="#fff"/>
<rect x="173" y="278" width="1" height="38" fill="#000"/>
<rect x="171" y="285" width="5" height="25" fill="#000"/>
<rect x="181" y="307" width="1" height="33" fill="#000"/>
<rect x="179" y="310" width="5" height="18" fill="#000"/>
<rect x="189" y="320" width="1" height="16" fill="#000"/>
<rect x="187" y="327" width="5" height="3" fill="#000"/>
<rect x="197" y="326" width="1" height="51" fill="#000"/>
<rect x="195" y="330" width="5" height="24" fill="#000"/>
<rect x="205" y="341" width="1" height="22" fill="#000"/>
<rect x="203" y="354" width="5" height="2" fill="#000"/>
<rect x="213" y="324" width="1" height="36" fill="#000"/>
<rect x="211" y="333" width="5" height="23" fill="#000"/>
<rect x="212" y="334" width="3" height="21" fill="#fff"/>
<rect x="221" y="316" width="1" height="20" fill="#000"/>
<rect x="219" y="318" width="5" height="16" fill="#000"/>
<rect x="220" y="319" width="3" height="14" fill="#fff"/>
<rect x="229" y="235" width="1" height="97" fill="#000"/>
<rect x="227" y="261" width="5" height="60" fill="#000"/>
<rect x="228" y="262" width="3" height="58" fill="#fff"/>
<rect x="237" y="249" width="1" height="45" fill="#000"/>
<rect x="235" y="261" width="5" height="3" fill="#000"/>
<rect x="245" y="242" width="1" height="38" fill="#000"/>
<rect x="243" y="248" width="5" height="16" fill="#000"/>
<rect x="244" y="249" width="3" height="14" fill="#fff"/>
<rect x="253" y="246" width="1" height="34" fill="#000"/>
<rect x="251" y="247" width="5" height="22" fill="#000"/>
<rect x="261" y="255" width="1" height="29" fill="#000"/>
<rect x="259" y="269" width="5" height="11" fill="#000"/>
<rect x="269" y="263" width="1" height="33" fill="#000"/>
<rect x="267" y="279" width="5" height="11" fill="#000"/>
<rect x="277" y="265" width="1" height="39" fill="#000"/>
<rect x="275" y="280" width="5" height="10" fill="#000"/>
<rect x="276" y="281" width="3" height="8" fill="#fff"/>
<rect x="285" y="248" width="1" height="37" fill="#000"/>
<rect x="283" y="248" width="5" height="30" fill="#000"/>
<rect x="284" y="249" width="3" height="28" fill="#fff"/>
<rect x="293" y="236" width="1" height="21" fill="#000"/>
<rect x="291" y="248" width="5" height="6" fill="#000"/>
<rect x="301" y="242" width="1" height="21" fill="#000"/>
<rect x="299" y="254" width="5" height="1" fill="#000"/>
<rect x="309" y="240" width="1" height="20" fill="#000"/>
<rect x="307" y="241" width="5" height="13" fill="#000"/>
<rect x="308" y="242" width="3" height="11" fill="#fff"/>
<rect x="317" y="234" width="1" height="22" fill="#000"/>
<rect x="315" y="240" width="5" height="4" fill="#000"/>
<rect x="325" y="240" width="1" height="11" fill="#000"/>
<rect x="323" y="243" width="5" height="1" fill="#000"/>
<rect x="333" y="235" width="1" height="32" fill="#000"/>
<rect x="331" y="242" width="5" height="2" fill="#000"/>
<rect x="341" y="229" width="1" height="21" fill="#000"/>
<rect x="339" y="242" width="5" height="2" fill="#000"/>
<rect x="349" y="239" width="1" height="13" fill="#000"/>
<rect x="347" y="244" width="5" height="4" fill="#000"/>
<rect x="357" y="224" width="1" height="28" fill="#000"/>
<rect x="355" y="224" width="5" height="22" fill="#000"/>
<rect x="356" y="225" width="3" height="20" fill="#fff"/>
<rect x="365" y="138" width="1" height="102" fill="#000"/>
<rect x="363" y="157" width="5" height="68" fill="#000"/>
<rect x="364" y="158" width="3" height="66" fill="#fff"/>
<rect x="373" y="151" width="1" height="42" fill="#000"/>
<rect x="371" y="158" width="5" height="14" fill="#000"/>
<rect x="381" y="157" width="1" height="20" fill="#000"/>
<rect x="379" y="162" width="5" height="12" fill="#000"/>
<rect x="380" y="163" width="3" height="10" fill="#fff"/>
<rect x="389" y="157" width="1" height="29" fill="#000"/>
<rect x="387" y="162" width="5" height="16" fill="#000"/>
<rect x="397" y="173" width="1" height="17" fill="#000"/>
<rect x="395" y="178" width="5" height="8" fill="#000"/>
<rect x="405" y="177" width="1" height="49" fill="#000"/>
<rect x="403" y="185" width="5" height="31" fill="#000"/>
<rect x="413" y="195" width="1" height="92" fill="#000"/>
<rect x="411" y="215" width="5" height="35" fill="#000"/>
<rect x="421" y="224" width="1" height="106" fill="#000"/>
<rect x="419" y="250" width="5" height="72" fill="#000"/>
<rect x="429" y="270" width="1" height="71" fill="#000"/>
<rect x="427" y="274" width="5" height="46" fill="#000"/>
<rect x="428" y="275" width="3" height="44" fill="#fff"/>
<rect x="437" y="250" width="1" height="46" fill="#000"/>
<rect x="435" y="252" width="5" height="22" fill="#000"/>
<rect x="436" y="253" width="3" height="20" fill="#fff"/>
<rect x="445" y="186" width="1" height="70" fill="#000"/>
<rect x="443" y="234" width="5" height="16" fill="#000"/>
<rect x="444" y="235" width="3" height="14" fill="#fff"/>
<rect x="453" y="214" width="1" height="63" fill="#000"/>
<rect x="451" y="233" width="5" height="34" fill="#000"/>
<rect x="461" y="241" width="1" height="60" fill="#000"/>
<rect x="459" y="261" width="5" height="7" fill="#000"/>
<rect x="460" y="262" width="3" height="5" fill="#fff"/>
<rect x="469" y="235" width="1" height="71" fill="#000"/>
<rect x="467" y="254" width="5" height="10" fill="#000"/>
<rect x="468" y="255" width="3" height="8" fill="#fff"/>
<rect x="477" y="226" width="1" height="70" fill="#000"/>
<rect x="475" y="253" width="5" height="39" fill="#000"/>
<rect x="485" y="241" width="1" height="51" fill="#000"/>
<rect x="483" y="241" width="5" height="51" fill="#000"/>
<rect x="484" y="242" width="3" height="49" fill="#fff"/>
<rect x="493" y="236" width="1" height="38" fill="#000"/>
<rect x="491" y="240" width="5" height="22" fill="#000"/>
<rect x="501" y="244" width="1" height="23" fill="#000"/>
<rect x="499" y="251" width="5" height="10" fill="#000"/>
<rect x="500" y="252" width="3" height="8" fill="#fff"/>
<rect x="509" y="236" width="1" height="44" fill="#000"/>
<rect x="507" y="251" width="5" height="9" fill="#000"/>
<rect x="517" y="244" width="1" height="18" fill="#000"/>
<rect x="515" y="248" width="5" height="12" fill="#000"/>
<rect x="516" y="249" width="3" height="10" fill="#fff"/>
<rect x="525" y="245" width="1" height="27" fill="#000"/>
<rect x="523" y="248" width="5" height="12" fill="#000"/>
<rect x="533" y="232" width="1" height="29" fill="#000"/>
<rect x="531" y="240" width="5" height="20" fill="#000"/>
<rect x="532" y="241" width="3" height="18" fill="#fff"/>
<rect x="541" y="233" width="1" height="21" fill="#000"/>
<rect x="539" y="238" width="5" height="12" fill="#000"/>
<rect x="549" y="248" width="1" height="20" fill="#000"/>
<rect x="547" y="249" width="5" height="9" fill="#000"/>
<rect x="557" y="254" width="1" height="67" fill="#000"/>
<rect x="555" y="257" width="5" height="21" fill="#000"/>
<rect x="565" y="275" width="1" height="31" fill="#000"/>
<rect x="563" y="278" width="5" height="9" fill="#000"/>
<rect x="573" y="268" width="1" height="41" fill="#000"/>
<rect x="571" y="273" width="5" height="13" fill="#000"/>
<rect x="572" y="274" width="3" height="11" fill="#fff"/>
<rect x="581" y="264" width="1" height="22" fill="#000"/>
<rect x="579" y="273" width="5" height="1" fill="#000"/>
<rect x="589" y="265" width="1" height="37" fill="#000"/>
<rect x="587" y="273" width="5" height="25" fill="#000"/>
<rect x="597" y="274" width="1" height="30" fill="#000"/>
<rect x="595" y="297" width="5" height="5" fill="#000"/>
<rect x="605" y="271" width="1" height="63" fill="#000"/>
<rect x="603" y="294" width="5" height="8" fill="#000"/>
<rect x="604" y="295" width="3" height="6" fill="#fff"/>
<rect x="613" y="289" width="1" height="105" fill="#000"/>
<rect x="611" y="294" width="5" height="98" fill="#000"/>
<rect x="621" y="358" width="1" height="51" fill="#000"/>
<rect x="619" y="369" width="5" height="23" fill="#000"/>
<rect x="620" y="370" width="3" height="21" fill="#fff"/>
<rect x="629" y="322" width="1" height="53" fill="#000"/>
<rect x="627" y="350" width="5" height="19" fill="#000"/>
<rect x="628" y="351" width="3" height="17" fill="#fff"/>
<rect x="637" y="331" width="1" height="31" fill="#000"/>
<rect x="635" y="342" width="5" height="8" fill="#000"/>
<rect x="636" y="343" width="3" height="6" fill="#fff"/>
<rect x="645" y="332" width="1" height="51" fill="#000"/>
<rect x="643" y="341" width="5" height="26" fill="#000"/>
<rect x="653" y="344" width="1" height="152" fill="#000"/>
<rect x="651" y="366" width="5" height="99" fill="#000"/>
<rect x="661" y="430" width="1" height="96" fill="#000"/>
<rect x="659" y="464" width="5" height="38" fill="#000"/>
<rect x="669" y="488" width="1" height="47" fill="#000"/>
<rect x="667" y="500" width="5" height="28" fill="#000"/>
<rect x="677" y="477" width="1" height="51" fill="#000"/>
<rect x="675" y="509" width="5" height="19" fill="#000"/>
<rect x="676" y="510" width="3" height="17" fill="#fff"/>
<rect x="685" y="488" width="1" height="49" fill="#000"/>
<rect x="683" y="509" width="5" height="16" fill="#000"/>
<rect x="693" y="493" width="1" height="39" fill="#000"/>
<rect x="691" y="508" width="5" height="16" fill="#000"/>
<rect x="692" y="509" width="3" height="14" fill="#fff"/>
<rect x="701" y="471" width="1" height="37" fill="#000"/>
<rect x="699" y="478" width="5" height="30" fill="#000"/>
<rect x="700" y="479" width="3" height="28" fill="#fff"/>
<rect x="709" y="461" width="1" height="21" fill="#000"/>
<rect x="707" y="476" width="5" height="2" fill="#000"/>
<rect x="717" y="473" width="1" height="39" fill="#000"/>
<rect x="715" y="478" width="5" height="24" fill="#000"/>
<rect x="725" y="482" width="1" height="26" fill="#000"/>
<rect x="723" y="494" width="5" height="8" fill="#000"/>
<rect x="733" y="484" width="1" height="39" fill="#000"/>
<rect x="731" y="501" width="5" height="15" fill="#000"/>
<rect x="741" y="505" width="1" height="50" fill="#000"/>
<rect x="739" y="515" width="5" height="39" fill="#000"/>
<rect x="749" y="511" width="1" height="49" fill="#000"/>
<rect x="747" y="528" width="5" height="25" fill="#000"/>
<rect x="748" y="529" width="3" height="23" fill="#fff"/>
<rect x="757" y="515" width="1" height="55" fill="#000"/>
<rect x="755" y="527" width="5" height="33" fill="#000"/>
<rect x="765" y="508" width="1" height="52" fill="#000"/>
<rect x="763" y="526" width="5" height="34" fill="#000"/>
<rect x="764" y="527" width="3" height="32" fill="#fff"/>
<rect x="773" y="497" width="1" height="33" fill="#000"/>
<rect x="771" y="509" width="5" height="15" fill="#000"/>
<rect x="772" y="510" width="3" height="13" fill="#fff"/>
<rect x="781" y="490" width="1" height="24" fill="#000"/>
<rect x="779" y="507" width="5" height="3" fill="#000"/>
<rect x="780" y="508" width="3" height="1" fill="#fff"/>
<rect x="789" y="480" width="1" height="56" fill="#000"/>
<rect x="787" y="507" width="5" height="29" fill="#000"/>
<rect x="797" y="506" width="1" height="72" fill="#000"/>
<rect x="795" y="536" width="5" height="30" fill="#000"/>
<rect x="805" y="550" width="1" height="108" fill="#000"/>
<rect x="803" y="566" width="5" height="62" fill="#000"/>
<rect x="813" y="547" width="1" height="113" fill="#000"/>
<rect x="811" y="550" width="5" height="76" fill="#000"/>
<rect x="812" y="551" width="3" height="74" fill="#fff"/>
<rect x="821" y="540" width="1" height="50" fill="#000"/>
<rect x="819" y="547" width="5" height="12" fill="#000"/>
<rect x="829" y="519" width="1" height="45" fill="#000"/>
<rect x="827" y="536" width="5" height="23" fill="#000"/>
<rect x="828" y="537" width="3" height="21" fill="#fff"/>
<rect x="837" y="518" width="1" height="41" fill="#000"/>
<rect x="835" y="536" width="5" height="2" fill="#000"/>
<rect x="845" y="455" width="1" height="104" fill="#000"/>
<rect x="843" y="508" width="5" height="30" fill="#000"/>
<rect x="844" y="509" width="3" height="28" fill="#fff"/>
<rect x="853" y="479" width="1" height="75" fill="#000"/>
<rect x="851" y="506" width="5" height="21" fill="#000"/>
<rect x="861" y="517" width="1" height="55" fill="#000"/>
<rect x="859" y="524" width="5" height="36" fill="#000"/>
<rect x="869" y="542" width="1" height="59" fill="#000"/>
<rect x="867" y="560" width="5" height="4" fill="#000"/>
<rect x="877" y="546" width="1" height="28" fill="#000"/>
<rect x="875" y="549" width="5" height="16" fill="#000"/>
<rect x="876" y="550" width="3" height="14" fill="#fff"/>
<rect x="885" y="514" width="1" height="36" fill="#000"/>
<rect x="883" y="532" width="5" height="16" fill="#000"/>
<rect x="884" y="533" width="3" height="14" fill="#fff"/>
<rect x="893" y="505" width="1" height="36" fill="#000"/>
<rect x="891" y="510" width="5" height="22" fill="#000"/>
<rect x="892" y="511" width="3" height="20" fill="#fff"/>
<rect x="901" y="494" width="1" height="24" fill="#000"/>
<rect x="899" y="496" width="5" height="12" fill="#000"/>
<rect x="900" y="497" width="3" height="10" fill="#fff"/>
<rect x="909" y="469" width="1" height="37" fill="#000"/>
<rect x="907" y="486" width="5" height="10" fill="#000"/>
<rect x="908" y="487" width="3" height="8" fill="#fff"/>
<rect x="917" y="469" width="1" height="45" fill="#000"/>
<rect x="915" y="488" width="5" height="22" fill="#000"/>
<rect x="925" y="500" width="1" height="19" fill="#000"/>
<rect x="923" y="509" width="5" height="3" fill="#000"/>
<rect x="933" y="496" width="1" height="16" fill="#000"/>
<rect x="931" y="508" width="5" height="4" fill="#000"/>
<rect x="932" y="509" width="3" height="2" fill="#fff"/>
<rect x="941" y="505" width="1" height="61" fill="#000"/>
<rect x="939" y="508" width="5" height="32" fill="#000"/>
<rect x="949" y="530" width="1" height="34" fill="#000"/>
<rect x="947" y="539" width="5" height="25" fill="#000"/>
<rect x="957" y="562" width="1" height="52" fill="#000"/>
<rect x="955" y="563" width="5" height="25" fill="#000"/>
<rect x="965" y="574" width="1" height="45" fill="#000"/>
<rect x="963" y="587" width="5" height="1" fill="#000"/>
<rect x="973" y="558" width="1" height="32" fill="#000"/>
<rect x="971" y="566" width="5" height="22" fill="#000"/>
<rect x="972" y="567" width="3" height="20" fill="#fff"/>
<rect x="981" y="553" width="1" height="39" fill="#000"/>
<rect x="979" y="566" width="5" height="22" fill="#000"/>
<rect x="989" y="513" width="1" height="96" fill="#000"/>
<rect x="987" y="536" width="5" height="48" fill="#000"/>
<rect x="988" y="537" width="3" height="46" fill="#fff"/>
<rect x="997" y="485" width="1" height="68" fill="#000"/>
<rect x="995" y="520" width="5" height="14" fill="#000"/>
<rect x="996" y="521" width="3" height="12" fill="#fff"/>
<rect x="1005" y="485" width="1" height="61" fill="#000"/>
<rect x="1003" y="510" width="5" height="9" fill="#000"/>
<rect x="1004" y="511" width="3" height="7" fill="#fff"/>
<rect x="1013" y="498" width="1" height="26" fill="#000"/>
<rect x="1011" y="511" width="5" height="1" fill="#000"/>
<rect x="1021" y="478" width="1" height="40" fill="#000"/>
<rect x="1019" y="511" width="5" height="2" fill="#000"/>
<rect x="1029" y="492" width="1" height="38" fill="#000"/>
<rect x="1027" y="492" width="5" height="20" fill="#000"/>
<rect x="1028" y="493" width="3" height="18" fill="#fff"/>
<rect x="1037" y="480" width="1" height="62" fill="#000"/>
<rect x="1035" y="481" width="5" height="11" fill="#000"/>
<rect x="1036" y="482" width="3" height="9" fill="#fff"/>
</g>
<path d="M1050 110 H1059 L1054.5 115 Z" fill="#778899"/>
<g shape-rendering="crispEdges">
<rect x="10" y="107" width="2" height="588" fill="#fff"/>
<rect x="12.5" y="109.5" width="1305" height="566" fill="none" stroke="#000" stroke-width="1"/>
<rect x="1318" y="130" width="3" height="1" fill="#000"/>
<rect x="1318" y="163" width="3" height="1" fill="#000"/>
<rect x="1318" y="197" width="3" height="1" fill="#000"/>
<rect x="1318" y="231" width="3" height="1" fill="#000"/>
<rect x="1318" y="265" width="3" height="1" fill="#000"/>
<rect x="1318" y="299" width="3" height="1" fill="#000"/>
<rect x="1318" y="332" width="3" height="1" fill="#000"/>
<rect x="1318" y="366" width="3" height="1" fill="#000"/>
<rect x="1318" y="400" width="3" height="1" fill="#000"/>
<rect x="1318" y="434" width="3" height="1" fill="#000"/>
<rect x="1318" y="468" width="3" height="1" fill="#000"/>
<rect x="1318" y="501" width="3" height="1" fill="#000"/>
<rect x="1318" y="535" width="3" height="1" fill="#000"/>
<rect x="1318" y="569" width="3" height="1" fill="#000"/>
<rect x="1318" y="603" width="3" height="1" fill="#000"/>
<rect x="1318" y="637" width="3" height="1" fill="#000"/>
<rect x="1318" y="671" width="3" height="1" fill="#000"/>
<rect x="13" y="676" width="1" height="3" fill="#000"/>
<rect x="77" y="676" width="1" height="3" fill="#000"/>
<rect x="141" y="676" width="1" height="3" fill="#000"/>
<rect x="205" y="676" width="1" height="3" fill="#000"/>
<rect x="269" y="676" width="1" height="3" fill="#000"/>
<rect x="333" y="676" width="1" height="3" fill="#000"/>
<rect x="397" y="676" width="1" height="3" fill="#000"/>
<rect x="461" y="676" width="1" height="3" fill="#000"/>
<rect x="525" y="676" width="1" height="3" fill="#000"/>
<rect x="589" y="676" width="1" height="3" fill="#000"/>
<rect x="653" y="676" width="1" height="3" fill="#000"/>
<rect x="717" y="676" width="1" height="3" fill="#000"/>
<rect x="781" y="676" width="1" height="3" fill="#000"/>
<rect x="845" y="676" width="1" height="3" fill="#000"/>
<rect x="909" y="676" width="1" height="3" fill="#000"/>
<rect x="973" y="676" width="1" height="3" fill="#000"/>
<rect x="1037" y="676" width="1" height="3" fill="#000"/>
<rect x="1319" y="401" width="41" height="11" fill="#0000CC"/>
<rect x="1319" y="524" width="41" height="11" fill="#FF0000"/>
<rect x="1319" y="608" width="41" height="11" fill="#0000FF"/>
</g>
<text x="1323.5" y="131.40" font-size="9" fill="#000" textLength="32.3" lengthAdjust="spacingAndGlyphs">139.380</text>
<text x="1323.5" y="165.30" font-size="9" fill="#000" textLength="32.3" lengthAdjust="spacingAndGlyphs">139.290</text>
<text x="1323.5" y="199.30" font-size="9" fill="#000" textLength="32.3" lengthAdjust="spacingAndGlyphs">139.200</text>
<text x="1323.5" y="233.30" font-size="9" fill="#000" textLength="32.3" lengthAdjust="spacingAndGlyphs">139.110</text>
<text x="1323.5" y="267.30" font-size="9" fill="#000" textLength="32.3" lengthAdjust="spacingAndGlyphs">139.020</text>
<text x="1323.5" y="301.30" font-size="9" fill="#000" textLength="32.3" lengthAdjust="spacingAndGlyphs">138.930</text>
<text x="1323.5" y="334.30" font-size="9" fill="#000" textLength="32.3" lengthAdjust="spacingAndGlyphs">138.840</text>
<text x="1323.5" y="368.30" font-size="9" fill="#000" textLength="32.3" lengthAdjust="spacingAndGlyphs">138.750</text>
<text x="1323.5" y="402.30" font-size="9" fill="#000" textLength="32.3" lengthAdjust="spacingAndGlyphs">138.660</text>
<text x="1323.5" y="436.30" font-size="9" fill="#000" textLength="32.3" lengthAdjust="spacingAndGlyphs">138.570</text>
<text x="1323.5" y="470.30" font-size="9" fill="#000" textLength="32.3" lengthAdjust="spacingAndGlyphs">138.480</text>
<text x="1323.5" y="503.30" font-size="9" fill="#000" textLength="32.3" lengthAdjust="spacingAndGlyphs">138.390</text>
<text x="1323.5" y="537.30" font-size="9" fill="#000" textLength="32.3" lengthAdjust="spacingAndGlyphs">138.300</text>
<text x="1323.5" y="571.30" font-size="9" fill="#000" textLength="32.3" lengthAdjust="spacingAndGlyphs">138.210</text>
<text x="1323.5" y="605.30" font-size="9" fill="#000" textLength="32.3" lengthAdjust="spacingAndGlyphs">138.120</text>
<text x="1323.5" y="639.30" font-size="9" fill="#000" textLength="32.3" lengthAdjust="spacingAndGlyphs">138.030</text>
<text x="1323.5" y="673.30" font-size="9" fill="#000" textLength="32.3" lengthAdjust="spacingAndGlyphs">137.940</text>
<rect x="1319" y="401" width="41" height="11" fill="#0000CC" shape-rendering="crispEdges"/>
<text x="1323.5" y="409.80" font-size="9" fill="#fff" textLength="32.3" lengthAdjust="spacingAndGlyphs">138.642</text>
<rect x="1319" y="475" width="41" height="11" fill="#000" shape-rendering="crispEdges"/>
<text x="1323.5" y="483.80" font-size="9" fill="#fff" textLength="32.3" lengthAdjust="spacingAndGlyphs">138.445</text>
<rect x="1319" y="524" width="41" height="11" fill="#FF0000" shape-rendering="crispEdges"/>
<text x="1323.5" y="532.80" font-size="9" fill="#fff" textLength="32.3" lengthAdjust="spacingAndGlyphs">138.315</text>
<rect x="1319" y="608" width="41" height="11" fill="#0000FF" shape-rendering="crispEdges"/>
<text x="1323.5" y="616.80" font-size="9" fill="#fff" textLength="32.3" lengthAdjust="spacingAndGlyphs">138.092</text>
<text x="12.5" y="688.3" font-size="9" fill="#000" textLength="55" lengthAdjust="spacingAndGlyphs">23 May 2014</text>
<text x="76.5" y="688.3" font-size="9" fill="#000" textLength="58" lengthAdjust="spacingAndGlyphs">23 May 15:00</text>
<text x="140.5" y="688.3" font-size="9" fill="#000" textLength="58" lengthAdjust="spacingAndGlyphs">23 May 23:00</text>
<text x="204.5" y="688.3" font-size="9" fill="#000" textLength="58" lengthAdjust="spacingAndGlyphs">26 May 07:00</text>
<text x="268.5" y="688.3" font-size="9" fill="#000" textLength="58" lengthAdjust="spacingAndGlyphs">26 May 15:00</text>
<text x="332.5" y="688.3" font-size="9" fill="#000" textLength="58" lengthAdjust="spacingAndGlyphs">26 May 23:00</text>
<text x="396.5" y="688.3" font-size="9" fill="#000" textLength="58" lengthAdjust="spacingAndGlyphs">27 May 07:00</text>
<text x="460.5" y="688.3" font-size="9" fill="#000" textLength="58" lengthAdjust="spacingAndGlyphs">27 May 15:00</text>
<text x="524.5" y="688.3" font-size="9" fill="#000" textLength="58" lengthAdjust="spacingAndGlyphs">27 May 23:00</text>
<text x="588.5" y="688.3" font-size="9" fill="#000" textLength="58" lengthAdjust="spacingAndGlyphs">28 May 07:00</text>
<text x="652.5" y="688.3" font-size="9" fill="#000" textLength="58" lengthAdjust="spacingAndGlyphs">28 May 15:00</text>
<text x="716.5" y="688.3" font-size="9" fill="#000" textLength="58" lengthAdjust="spacingAndGlyphs">28 May 23:00</text>
<text x="780.5" y="688.3" font-size="9" fill="#000" textLength="58" lengthAdjust="spacingAndGlyphs">29 May 07:00</text>
<text x="844.5" y="688.3" font-size="9" fill="#000" textLength="58" lengthAdjust="spacingAndGlyphs">29 May 15:00</text>
<text x="908.5" y="688.3" font-size="9" fill="#000" textLength="58" lengthAdjust="spacingAndGlyphs">29 May 23:00</text>
<text x="972.5" y="688.3" font-size="9" fill="#000" textLength="58" lengthAdjust="spacingAndGlyphs">30 May 07:00</text>
<text x="1036.5" y="688.3" font-size="9" fill="#000" textLength="58" lengthAdjust="spacingAndGlyphs">30 May 15:00</text>
<text x="20" y="127.2" font-size="9" fill="#000" textLength="80" lengthAdjust="spacingAndGlyphs">#1883369 buy 0.20</text>
<path d="M27 129.5 h3 M32 129.5 h5 M39 129.5 h2 M43 129.5 h6 M51 129.5 h3 M56 129.5 h2 M60 129.5 h4 M66 129.5 h5 M68.5 127 v5" stroke="#000" stroke-width="1.4" fill="none"/>
<rect x="14" y="111" width="214" height="11" fill="#fff"/>
<path d="M16 116 H23 L19.5 120 Z" fill="#000"/>
<text x="28.2" y="120.6" font-size="9" fill="#000" textLength="196.5" lengthAdjust="spacingAndGlyphs" xml:space="preserve">EURJPY,H1  138.415 138.447 138.285 138.445</text>
</svg>
<div style="left:8px;top:695px;width:1354px;height:1px;background:#222;"></div>
<div style="left:8px;top:696px;width:1354px;height:20px;background:#F0F0F0;"></div>
<span style="left:23.3px;top:697.00px;font-size:11px;line-height:15px;color:#555;transform:scaleX(0.9026);transform-origin:0 50%;">EURUSD,M15</span>
<span style="left:111.4px;top:697.00px;font-size:11px;line-height:15px;color:#555;transform:scaleX(0.8777);transform-origin:0 50%;">GBPUSD,H1</span>
<span style="left:190px;top:697.00px;font-size:11px;line-height:15px;color:#555;transform:scaleX(0.9306);transform-origin:0 50%;">USDJPY,H4</span>
<span style="left:343px;top:697.00px;font-size:11px;line-height:15px;color:#555;transform:scaleX(0.9233);transform-origin:0 50%;">GBPCHF,H4</span>
<span style="left:424px;top:697.00px;font-size:11px;line-height:15px;color:#555;transform:scaleX(0.9059);transform-origin:0 50%;">AUDUSD,Daily</span>
<span style="left:513.3px;top:697.00px;font-size:11px;line-height:15px;color:#555;transform:scaleX(0.9095);transform-origin:0 50%;">NZDUSD,Daily</span>
<span style="left:601.7px;top:697.00px;font-size:11px;line-height:15px;color:#555;transform:scaleX(0.9331);transform-origin:0 50%;">EURCHF,H4</span>
<span style="left:681.7px;top:697.00px;font-size:11px;line-height:15px;color:#555;transform:scaleX(0.9148);transform-origin:0 50%;">XAUUSD,H4</span>
<span style="left:761.7px;top:697.00px;font-size:11px;line-height:15px;color:#555;transform:scaleX(0.9098);transform-origin:0 50%;">EURGBP,Daily</span>
<span style="left:850px;top:697.00px;font-size:11px;line-height:15px;color:#555;transform:scaleX(0.9102);transform-origin:0 50%;">GBPJPY,H1</span>
<span style="left:927px;top:697.00px;font-size:11px;line-height:15px;color:#555;transform:scaleX(0.9214);transform-origin:0 50%;">AUDNZD,H4</span>
<span style="left:1006px;top:697.00px;font-size:11px;line-height:15px;color:#555;transform:scaleX(0.9281);transform-origin:0 50%;">USDCAD,H1</span>
<span style="left:1086px;top:697.00px;font-size:11px;line-height:15px;color:#555;transform:scaleX(0.9396);transform-origin:0 50%;">USDCHF,H4</span>
<div style="left:100px;top:698px;width:1px;height:14px;background:#666;"></div>
<div style="left:180px;top:698px;width:1px;height:14px;background:#666;"></div>
<div style="left:412px;top:698px;width:1px;height:14px;background:#666;"></div>
<div style="left:504px;top:698px;width:1px;height:14px;background:#666;"></div>
<div style="left:592px;top:698px;width:1px;height:14px;background:#666;"></div>
<div style="left:672px;top:698px;width:1px;height:14px;background:#666;"></div>
<div style="left:752px;top:698px;width:1px;height:14px;background:#666;"></div>
<div style="left:841px;top:698px;width:1px;height:14px;background:#666;"></div>
<div style="left:916px;top:698px;width:1px;height:14px;background:#666;"></div>
<div style="left:996px;top:698px;width:1px;height:14px;background:#666;"></div>
<div style="left:1076px;top:698px;width:1px;height:14px;background:#666;"></div>
<div style="left:1156px;top:698px;width:1px;height:14px;background:#666;"></div>
<div style="left:8px;top:696px;width:2px;height:19px;background:#888;"></div>
<div style="left:256px;top:695px;width:76px;height:19px;background:#fff;border:1px solid #000;border-top:none;"></div>
<span style="left:266px;top:697.00px;font-size:11px;line-height:15px;color:#000;transform:scaleX(0.9137);transform-origin:0 50%;">EURJPY,H1</span>
<svg style="left:1330px;top:700px" width="30" height="10" viewBox="1330 700 30 10"><path d="M1337.5 702.3 V708.2 L1333.8 705.25 Z M1350.7 702.3 V708.2 L1354.4 705.25 Z" fill="#A0A0A0"/></svg>
<div style="left:8px;top:716px;width:1354px;height:20px;background:#F0F0F0;"></div>
<span style="left:10px;top:719.20px;font-size:12px;line-height:16px;color:#000;transform:scaleX(0.9593);transform-origin:0 50%;">Для справки, нажмите F1</span>
<div style="left:636px;top:719px;width:1px;height:15px;background:#A8A8A8;"></div>
<div style="left:752px;top:719px;width:1px;height:15px;background:#A8A8A8;"></div>
<div style="left:855px;top:719px;width:1px;height:15px;background:#A8A8A8;"></div>
<div style="left:925px;top:719px;width:1px;height:15px;background:#A8A8A8;"></div>
<div style="left:995px;top:719px;width:1px;height:15px;background:#A8A8A8;"></div>
<div style="left:1064px;top:719px;width:1px;height:15px;background:#A8A8A8;"></div>
<div style="left:1134px;top:719px;width:1px;height:15px;background:#A8A8A8;"></div>
<div style="left:1200px;top:719px;width:1px;height:15px;background:#A8A8A8;"></div>
<span style="left:642.3px;top:719.20px;font-size:12px;line-height:16px;color:#000;transform:scaleX(0.9731);transform-origin:0 50%;">Default</span>
<span style="left:758.3px;top:719.20px;font-size:12px;line-height:16px;color:#000;transform:scaleX(0.8927);transform-origin:0 50%;">2014.05.30 13:00</span>
<span style="left:860.7px;top:719.20px;font-size:12px;line-height:16px;color:#000;transform:scaleX(0.8976);transform-origin:0 50%;">O: 138.360</span>
<span style="left:931px;top:719.20px;font-size:12px;line-height:16px;color:#000;transform:scaleX(0.8959);transform-origin:0 50%;">H: 138.454</span>
<span style="left:1002px;top:719.20px;font-size:12px;line-height:16px;color:#000;transform:scaleX(0.8780);transform-origin:0 50%;">L: 138.349</span>
<span style="left:1070.5px;top:719.20px;font-size:12px;line-height:16px;color:#000;transform:scaleX(0.8738);transform-origin:0 50%;">C: 138.362</span>
<span style="left:1140.5px;top:719.20px;font-size:12px;line-height:16px;color:#000;transform:scaleX(0.8919);transform-origin:0 50%;">V: 1468</span>
<span style="left:1263.4px;top:719.20px;font-size:12px;line-height:16px;color:#000;transform:scaleX(0.9220);transform-origin:0 50%;">4596/5 kb</span>
<svg style="left:1205px;top:722px" width="25" height="11" viewBox="0 0 25 11" shape-rendering="crispEdges"><rect x="0" y="0" width="2" height="9" fill="#5A8A10"/><rect x="0" y="10" width="2" height="1" fill="#A01010"/><rect x="3" y="0" width="2" height="8" fill="#5A8A10"/><rect x="3" y="9" width="2" height="2" fill="#A01010"/><rect x="6" y="0" width="2" height="7" fill="#5A8A10"/><rect x="6" y="8" width="2" height="3" fill="#A01010"/><rect x="9" y="0" width="2" height="6" fill="#5A8A10"/><rect x="9" y="7" width="2" height="4" fill="#A01010"/><rect x="12" y="0" width="2" height="5" fill="#5A8A10"/><rect x="12" y="6" width="2" height="5" fill="#A01010"/><rect x="15" y="0" width="2" height="4" fill="#5A8A10"/><rect x="15" y="5" width="2" height="6" fill="#A01010"/><rect x="18" y="0" width="2" height="3" fill="#5A8A10"/><rect x="18" y="4" width="2" height="7" fill="#A01010"/><rect x="21" y="0" width="2" height="2" fill="#5A8A10"/><rect x="21" y="3" width="2" height="8" fill="#A01010"/></svg>
<svg style="left:1349px;top:723px" width="13" height="13" viewBox="0 0 13 13"><path d="M0 13 L13 0 M4 13 L13 4 M8 13 L13 8" stroke="#A8A8A8" stroke-width="1.2"/></svg>
<div style="left:8px;top:736px;width:1362px;height:8px;background:#56B7BF;"></div>
<div style="left:8px;top:736px;width:1362px;height:1px;background:#4AA3AB;"></div>
<div style="left:60px;top:737px;width:59px;height:8px;background:#79C5CA;border:1px solid #9BD5D9;border-bottom:none;"></div>
<div style="left:246px;top:737px;width:59px;height:8px;background:#79C5CA;border:1px solid #9BD5D9;border-bottom:none;"></div>
<div style="left:370px;top:737px;width:59px;height:8px;background:#79C5CA;border:1px solid #9BD5D9;border-bottom:none;"></div>
<div style="left:432px;top:737px;width:59px;height:8px;background:#79C5CA;border:1px solid #9BD5D9;border-bottom:none;"></div>
<div style="left:308px;top:737px;width:59px;height:8px;background:#93D0D4;border:1px solid #D5EEF0;border-bottom:none;"></div>
<svg style="left:8px;top:736px" width="500" height="8" viewBox="0 0 500 8">
<path d="M22 8 L38 5.5 V8 Z" fill="#fff"/>
<circle cx="81" cy="15" r="9.5" fill="#E0503C"/>
<rect x="128" y="4.5" width="30" height="4" fill="#0A8A0A"/>
<path d="M190 8 L207.5 3.5 V8 Z" fill="#2A50B0"/>
<ellipse cx="262" cy="10" rx="9" ry="5.5" fill="#189AF0"/>
<circle cx="328" cy="17" r="14" fill="#F59A28"/>
<rect x="376" y="3.6" width="30.5" height="8" rx="1.5" fill="#9CC4E6" stroke="#3A78B8" stroke-width="0.9"/>
<rect x="438" y="5" width="18" height="6" rx="1" fill="#7FB2E8"/>
</svg>
</body></html>
